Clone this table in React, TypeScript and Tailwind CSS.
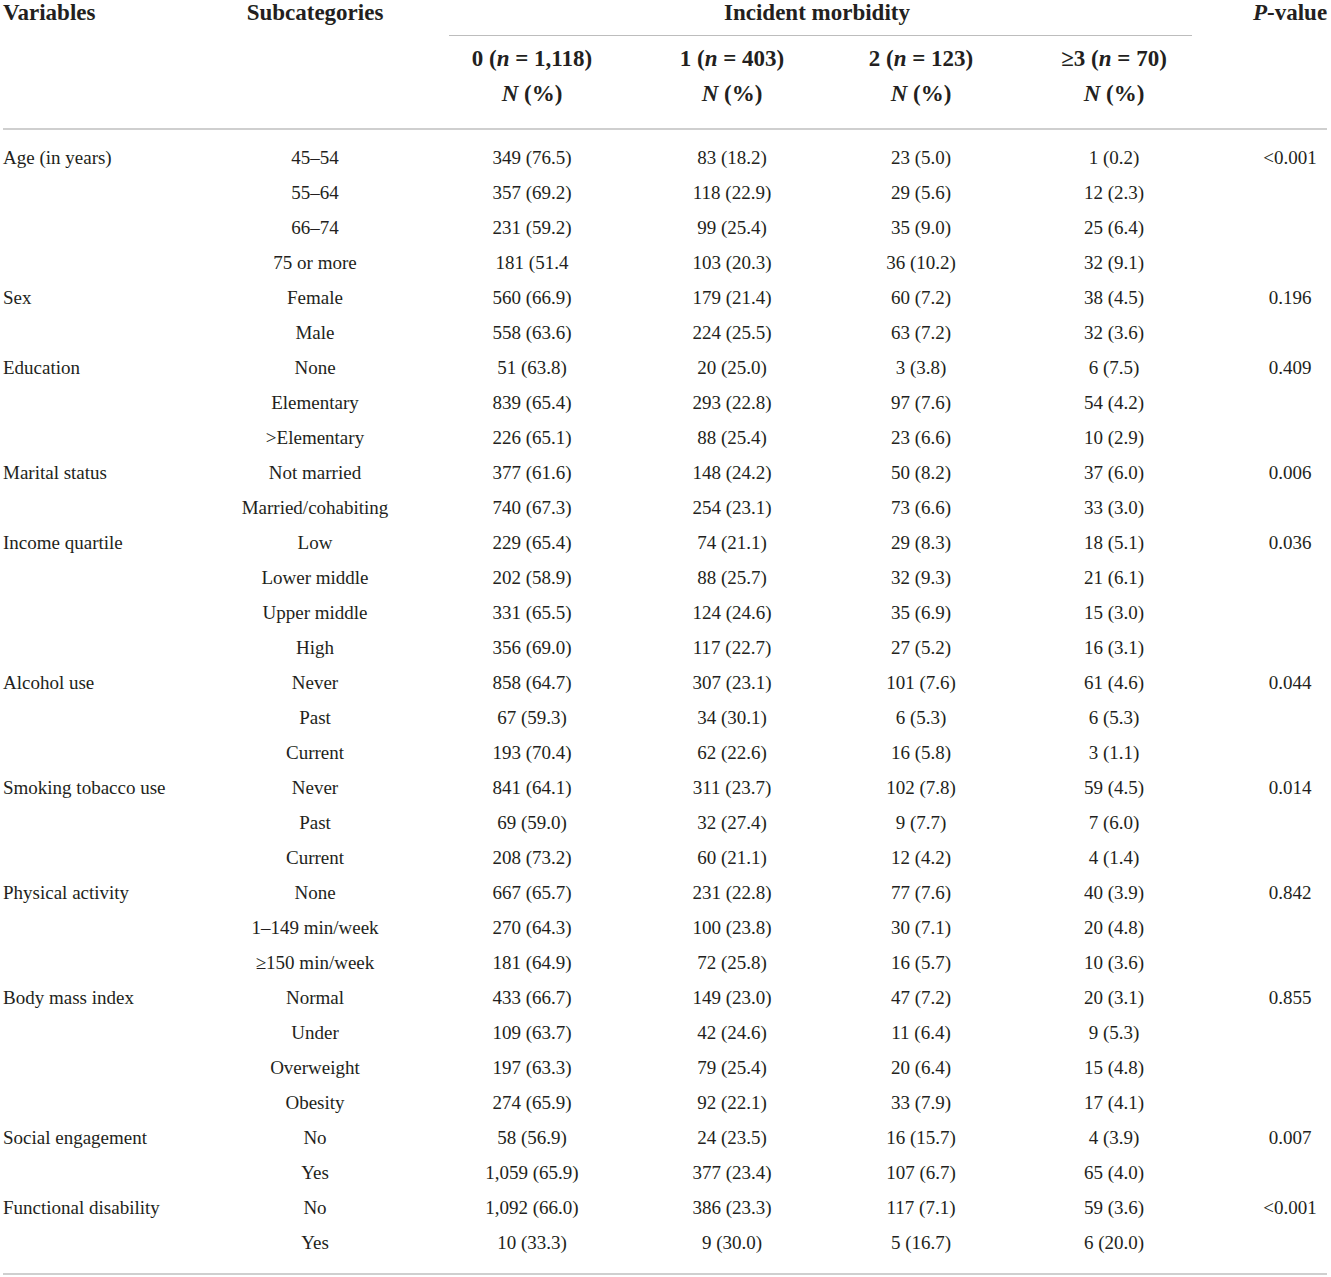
import React from "react";

type Row = [string, string, string, string, string, string, string];

const rows: Row[] = [
  ["Age (in years)", "45–54", "349 (76.5)", "83 (18.2)", "23 (5.0)", "1 (0.2)", "<0.001"],
  ["", "55–64", "357 (69.2)", "118 (22.9)", "29 (5.6)", "12 (2.3)", ""],
  ["", "66–74", "231 (59.2)", "99 (25.4)", "35 (9.0)", "25 (6.4)", ""],
  ["", "75 or more", "181 (51.4", "103 (20.3)", "36 (10.2)", "32 (9.1)", ""],
  ["Sex", "Female", "560 (66.9)", "179 (21.4)", "60 (7.2)", "38 (4.5)", "0.196"],
  ["", "Male", "558 (63.6)", "224 (25.5)", "63 (7.2)", "32 (3.6)", ""],
  ["Education", "None", "51 (63.8)", "20 (25.0)", "3 (3.8)", "6 (7.5)", "0.409"],
  ["", "Elementary", "839 (65.4)", "293 (22.8)", "97 (7.6)", "54 (4.2)", ""],
  ["", ">Elementary", "226 (65.1)", "88 (25.4)", "23 (6.6)", "10 (2.9)", ""],
  ["Marital status", "Not married", "377 (61.6)", "148 (24.2)", "50 (8.2)", "37 (6.0)", "0.006"],
  ["", "Married/cohabiting", "740 (67.3)", "254 (23.1)", "73 (6.6)", "33 (3.0)", ""],
  ["Income quartile", "Low", "229 (65.4)", "74 (21.1)", "29 (8.3)", "18 (5.1)", "0.036"],
  ["", "Lower middle", "202 (58.9)", "88 (25.7)", "32 (9.3)", "21 (6.1)", ""],
  ["", "Upper middle", "331 (65.5)", "124 (24.6)", "35 (6.9)", "15 (3.0)", ""],
  ["", "High", "356 (69.0)", "117 (22.7)", "27 (5.2)", "16 (3.1)", ""],
  ["Alcohol use", "Never", "858 (64.7)", "307 (23.1)", "101 (7.6)", "61 (4.6)", "0.044"],
  ["", "Past", "67 (59.3)", "34 (30.1)", "6 (5.3)", "6 (5.3)", ""],
  ["", "Current", "193 (70.4)", "62 (22.6)", "16 (5.8)", "3 (1.1)", ""],
  ["Smoking tobacco use", "Never", "841 (64.1)", "311 (23.7)", "102 (7.8)", "59 (4.5)", "0.014"],
  ["", "Past", "69 (59.0)", "32 (27.4)", "9 (7.7)", "7 (6.0)", ""],
  ["", "Current", "208 (73.2)", "60 (21.1)", "12 (4.2)", "4 (1.4)", ""],
  ["Physical activity", "None", "667 (65.7)", "231 (22.8)", "77 (7.6)", "40 (3.9)", "0.842"],
  ["", "1–149 min/week", "270 (64.3)", "100 (23.8)", "30 (7.1)", "20 (4.8)", ""],
  ["", "≥150 min/week", "181 (64.9)", "72 (25.8)", "16 (5.7)", "10 (3.6)", ""],
  ["Body mass index", "Normal", "433 (66.7)", "149 (23.0)", "47 (7.2)", "20 (3.1)", "0.855"],
  ["", "Under", "109 (63.7)", "42 (24.6)", "11 (6.4)", "9 (5.3)", ""],
  ["", "Overweight", "197 (63.3)", "79 (25.4)", "20 (6.4)", "15 (4.8)", ""],
  ["", "Obesity", "274 (65.9)", "92 (22.1)", "33 (7.9)", "17 (4.1)", ""],
  ["Social engagement", "No", "58 (56.9)", "24 (23.5)", "16 (15.7)", "4 (3.9)", "0.007"],
  ["", "Yes", "1,059 (65.9)", "377 (23.4)", "107 (6.7)", "65 (4.0)", ""],
  ["Functional disability", "No", "1,092 (66.0)", "386 (23.3)", "117 (7.1)", "59 (3.6)", "<0.001"],
  ["", "Yes", "10 (33.3)", "9 (30.0)", "5 (16.7)", "6 (20.0)", ""],
];

const groups: [string, string][] = [
  ["0", "1,118"],
  ["1", "403"],
  ["2", "123"],
  ["≥3", "70"],
];

const cols = "grid grid-cols-[203px_218px_216px_184px_194px_192px_117px]";

export default function App() {
  return (
    <div
      className="w-[1331px] min-h-[1277px] bg-white pl-[3px] pr-[1px] text-[#231f20]"
      style={{ fontFamily: '"Liberation Serif", "Times New Roman", serif' }}
    >
      <div className="w-[1324px]">
        {/* Header */}
        <div
          className={`${cols} grid-rows-[36px_92px] h-[130px] border-b-2 border-[#cfcfcf] text-[23px] font-bold`}
        >
          <div className="row-span-2 leading-[26px] whitespace-nowrap">Variables</div>
          <div className="row-span-2 text-center leading-[26px] whitespace-nowrap">Subcategories</div>
          <div className="col-span-4 h-[36px]">
            <div className="ml-[25px] mr-[18px] h-[36px] border-b border-[#bdbdbd] text-center leading-[26px] pr-[7px]">
              Incident morbidity
            </div>
          </div>
          <div className="row-span-2 pl-[43px] text-center leading-[26px] whitespace-nowrap">
            <span className="italic">P</span>-value
          </div>
          {groups.map(([k, n]) => (
            <div key={k} className="pt-[5px] text-center leading-[35px] whitespace-nowrap">
              <div>
                {k} (<span className="italic">n</span> = {n})
              </div>
              <div>
                <span className="italic">N</span> (%)
              </div>
            </div>
          ))}
        </div>

        {/* Body */}
        <div className="pt-[10px] pb-[13px] border-b-2 border-[#cfcfcf] text-[19px]">
          {rows.map((r, i) => (
            <div key={i} className={`${cols} h-[35px] leading-[35px] whitespace-nowrap`}>
              <div>{r[0]}</div>
              <div className="text-center">{r[1]}</div>
              <div className="text-center">{r[2]}</div>
              <div className="text-center">{r[3]}</div>
              <div className="text-center">{r[4]}</div>
              <div className="text-center">{r[5]}</div>
              <div className="pl-[43px] text-center">{r[6]}</div>
            </div>
          ))}
        </div>
      </div>
    </div>
  );
}
